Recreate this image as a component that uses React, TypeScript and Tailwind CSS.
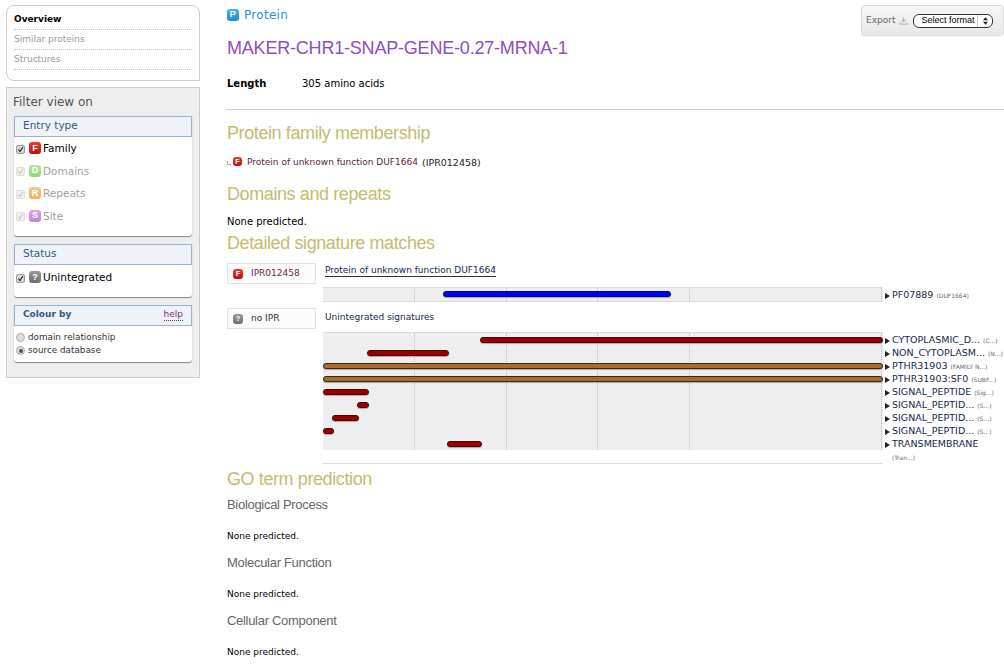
import type { ReactNode } from 'react'

const verdana = "font-['DejaVu_Sans',sans-serif]"

const badgeColors = {
  F: 'bg-gradient-to-b from-[#f0372a] to-[#b80f0a]',
  D: 'bg-gradient-to-b from-[#b4e89a] to-[#92d67a]',
  R: 'bg-gradient-to-b from-[#fcc88e] to-[#f5ab6c]',
  S: 'bg-gradient-to-b from-[#dca2ea] to-[#c57fdb]',
  Q: 'bg-gradient-to-b from-[#9a9a9a] to-[#6f6f6f]',
  P: 'bg-gradient-to-b from-[#41b4f0] to-[#1a8fd8]',
}

function Badge({ kind, label, size = 'w-[12px] h-[12px] text-[9px]' }: { kind: keyof typeof badgeColors; label: string; size?: string }) {
  return (
    <span className={`${size} ${badgeColors[kind]} inline-flex items-center justify-center rounded-[3px] font-bold leading-none text-white shrink-0 font-['Liberation_Sans',sans-serif]`}>
      {label}
    </span>
  )
}

function Check({ disabled }: { disabled?: boolean }) {
  return (
    <span className={`w-[9px] h-[9px] rounded-[2px] border shrink-0 flex items-center justify-center ${disabled ? 'border-[#dedede] bg-[#f0f0f0]' : 'border-[#9a9a9a] bg-[#d8d8d8]'}`}>
      <svg viewBox="0 0 10 10" className="w-[9px] h-[9px]">
        <path d="M2 5 L4.2 8 L8.5 1.5" fill="none" stroke={disabled ? '#c4c4c4' : '#222'} strokeWidth="1.6" />
      </svg>
    </span>
  )
}

function FilterRow({ kind, label, text, disabled }: { kind: keyof typeof badgeColors; label: string; text: string; disabled?: boolean }) {
  return (
    <div className="flex items-center pl-[2px] h-[22.5px]">
      <Check disabled={disabled} />
      <span className="ml-[4px] mb-[7px]">
        <Badge kind={kind} label={label} />
      </span>
      <span className={`ml-[2px] text-[10.5px] ${disabled ? 'text-[#a0a0a0]' : 'text-black'}`}>{text}</span>
    </div>
  )
}

function FilterBox({ title, right, bold, bodyClass, children }: { title: string; right?: ReactNode; bold?: boolean; bodyClass: string; children: ReactNode }) {
  return (
    <div className="mx-[7px] bg-white rounded-b-[3px] shadow-[0_1px_1px_#888]">
      <div className={`h-[21px] pb-[1px] bg-[#eff3f7] border border-[#97b4d0] flex items-center justify-between px-[8px] text-[#35587f] ${bold ? 'text-[9px] font-bold' : 'text-[10.5px]'}`}>
        <span>{title}</span>
        {right}
      </div>
      <div className={bodyClass}>{children}</div>
    </div>
  )
}

function Sidebar() {
  return (
    <aside className="w-[194px] ml-[6px] shrink-0 pt-[5px]">
      <nav className="h-[76px] border border-[#cccccc] rounded-tr-[8px] rounded-tl-[8px] rounded-bl-[8px] px-[7px] pt-[4px] text-[9px]">
        <div className="h-[20px] pt-[1px] flex items-center border-b border-dotted border-[#c4c4c4] font-bold text-black">Overview</div>
        <div className="h-[20px] pt-[1px] flex items-center border-b border-dotted border-[#c4c4c4] text-[#999999]">Similar proteins</div>
        <div className="h-[20px] pt-[1px] flex items-center border-b border-dotted border-[#c4c4c4] text-[#999999]">Structures</div>
      </nav>
      <div className="mt-[6px] h-[291px] bg-[#eeeeee] border border-[#cccccc] pt-[7px]">
        <div className="h-[14px] pl-[6px] mb-[7px] flex items-center text-[12px] text-[#555555]">Filter view on</div>
        <FilterBox title="Entry type" bodyClass="h-[99px] pt-[1px]">
          <FilterRow kind="F" label="F" text="Family" />
          <FilterRow kind="D" label="D" text="Domains" disabled />
          <FilterRow kind="R" label="R" text="Repeats" disabled />
          <FilterRow kind="S" label="S" text="Site" disabled />
        </FilterBox>
        <div className="h-[8px]" />
        <FilterBox title="Status" bodyClass="h-[32px] pt-[2px]">
          <FilterRow kind="Q" label="?" text="Unintegrated" />
        </FilterBox>
        <div className="h-[8px]" />
        <FilterBox
          title="Colour by"
          bold
          right={<span className="text-[9px] font-normal text-[#7b2a7b] border-b border-dotted border-[#7b2a7b] leading-[11px]">help</span>}
          bodyClass="h-[36px] pt-[5px] pl-[2px] text-[8.8px] text-[#333]"
        >
          <div className="h-[13px] flex items-center">
            <span className="w-[9px] h-[9px] rounded-full border border-[#aaa] bg-[#ddd] mr-[3px]" />
            domain relationship
          </div>
          <div className="h-[13px] flex items-center">
            <span className="w-[9px] h-[9px] rounded-full border border-[#aaa] bg-[#ddd] mr-[3px] flex items-center justify-center">
              <span className="w-[4px] h-[4px] rounded-full bg-[#555]" />
            </span>
            source database
          </div>
        </FilterBox>
      </div>
    </aside>
  )
}

function Heading({ children, className }: { children: ReactNode; className: string }) {
  return <h2 className={`font-['Liberation_Sans',sans-serif] text-[18px] tracking-[-0.4px] text-[#c4bc6c] flex items-center ${className}`}>{children}</h2>
}

function SubHeading({ children }: { children: ReactNode }) {
  return <h3 className="font-['Liberation_Sans',sans-serif] h-[22px] flex items-center text-[13px] tracking-[-0.3px] text-[#666666]">{children}</h3>
}

const grid = [91, 183, 274, 366, 558]

function Track({ className, children }: { className: string; children: ReactNode }) {
  return (
    <div className={`relative w-[560px] bg-[#eeeeee] ${className}`}>
      {grid.map((x) => (
        <span key={x} className="absolute top-0 bottom-0 border-l border-dotted border-[#bdbdbd]" style={{ left: x }} />
      ))}
      {children}
    </div>
  )
}

const barColor = {
  blue: 'bg-[#0000f0] border-[#000090]',
  red: 'bg-[#990000] border-[#500000]',
  brown: 'bg-[#a86c32] border-[#3a2a14]',
}

function Bar({ from, to, top, color }: { from: number; to: number; top: number; color: keyof typeof barColor }) {
  return (
    <span
      className={`absolute h-[6px] rounded-full border shadow-[0_1px_1px_#aaa] ${barColor[color]}`}
      style={{ left: from - 323, width: to - from, top }}
    />
  )
}

function Arrow() {
  return (
    <svg viewBox="0 0 5 6" className="w-[5px] h-[6px] shrink-0">
      <path d="M0 0 L5 3 L0 6 Z" fill="#222" />
    </svg>
  )
}

const matches: { from: number; to: number; color: keyof typeof barColor; name: string; note: string }[] = [
  { from: 480, to: 883, color: 'red', name: 'CYTOPLASMIC_D...', note: '(C...)' },
  { from: 367, to: 449, color: 'red', name: 'NON_CYTOPLASM...', note: '(N...)' },
  { from: 323, to: 883, color: 'brown', name: 'PTHR31903', note: '(FAMILY N...)' },
  { from: 323, to: 883, color: 'brown', name: 'PTHR31903:SF0', note: '(SUBF...)' },
  { from: 323, to: 369, color: 'red', name: 'SIGNAL_PEPTIDE', note: '(Sig...)' },
  { from: 357, to: 369, color: 'red', name: 'SIGNAL_PEPTID...', note: '(S...)' },
  { from: 332, to: 359, color: 'red', name: 'SIGNAL_PEPTID...', note: '(S...)' },
  { from: 323, to: 334, color: 'red', name: 'SIGNAL_PEPTID...', note: '(S...)' },
  { from: 447, to: 482, color: 'red', name: 'TRANSMEMBRANE', note: '' },
]

function TrackLabel({ name, note }: { name: string; note: string }) {
  return (
    <div className="h-[13px] flex items-center whitespace-nowrap">
      <Arrow />
      <span className="ml-[2px] text-[9.5px] text-[#14284b]">{name}</span>
      {note && <span className="ml-[3px] text-[6px] text-[#666]">{note}</span>}
    </div>
  )
}

function EntryTag({ className, children }: { className: string; children: ReactNode }) {
  return <div className={`w-[89px] bg-[#fbfbfb] border border-[#e2e2e2] flex items-center pl-[5px] gap-[8px] text-[9px] shrink-0 ${className}`}>{children}</div>
}

export default function App() {
  return (
    <div className={`w-[1004px] h-[667px] overflow-hidden bg-white flex ${verdana}`}>
      <Sidebar />
      <main className="ml-[27px] flex-1 relative text-[9px] text-black">
        {/* Export */}
        <div className="absolute top-[5px] right-0 w-[143px] h-[31px] rounded-[3px] border border-[#dddddd] bg-gradient-to-b from-[#f6f6f6] to-[#e8e8e8] flex items-center pl-[4px] text-[#666]">
          Export
          <svg viewBox="0 0 10 10" className="w-[9px] h-[9px] ml-[4px]">
            <path d="M5 1 V6 M3 4 L5 6.5 L7 4 M1 7 V9 H9 V7" fill="none" stroke="#bbb" strokeWidth="1.3" />
          </svg>
          <div className="ml-[5px] w-[80px] h-[14px] rounded-[6px] border border-[#333] bg-white flex items-center text-[9px] text-black font-['Liberation_Sans',sans-serif] pl-[7px] whitespace-nowrap">
            <span className="flex-1">Select format</span>
            <span className="w-[15px] h-full border-l border-[#ccc] flex items-center justify-center">
              <svg viewBox="0 0 6 9" className="w-[5px] h-[8px]">
                <path d="M3 0 L6 3.5 H0 Z M3 9 L0 5.5 H6 Z" fill="#222" />
              </svg>
            </span>
          </div>
        </div>

        <div className="h-[28px] pt-[1px] flex items-center gap-[5px] text-[12px] tracking-[0.3px] text-[#2a8fe0]">
          <Badge kind="P" label="P" />
          Protein
        </div>
        <h1 className="h-[40px] pt-[1px] flex items-center font-['Liberation_Sans',sans-serif] text-[18px] tracking-[-0.2px] text-[#8a4fc0]">
          MAKER-CHR1-SNAP-GENE-0.27-MRNA-1
        </h1>
        <div className="h-[30px] flex items-center text-[10px]">
          <span className="w-[75px] font-bold">Length</span>
          <span>305 amino acids</span>
        </div>
        <hr className="mt-[11px] border-[#cccccc]" />
        <Heading className="h-[46px]">Protein family membership</Heading>
        <div className="h-[10px] mt-[2px] flex items-center">
          <span className="w-[4px] h-[4px] border-l border-b border-[#aaa] mr-[2px]" />
          <span className="mb-[3px] mr-[5px]">
            <Badge kind="F" label="F" size="w-[9px] h-[9px] text-[7px]" />
          </span>
          <span className="text-[#5a2440]">Protein of unknown function DUF1664</span>
          <span className="ml-[4px] text-[9.5px] text-[#222]">(IPR012458)</span>
        </div>
        <Heading className="h-[43px] mt-[5px]">Domains and repeats</Heading>
        <div className="h-[10px] flex items-center text-[10px]">None predicted.</div>
        <Heading className="h-[35px]">Detailed signature matches</Heading>

        <div className="flex items-start mt-[2px]">
          <EntryTag className="h-[21px]">
            <Badge kind="F" label="F" size="w-[10px] h-[10px] text-[7.5px]" />
            <span className="text-[#6a2a50]">IPR012458</span>
          </EntryTag>
          <div className="ml-[7px]">
            <div className="h-[24px] flex items-start pl-[2px] pt-[2px]">
              <span className="border-b border-[#333] text-[#14284b] leading-[11px]">Protein of unknown function DUF1664</span>
            </div>
            <div className="flex">
              <Track className="h-[15px] border-y border-[#dddddd]">
                <Bar from={443} to={671} top={3} color="blue" />
              </Track>
              <div className="ml-[2px] pt-[2px]">
                <TrackLabel name="PF07889" note="(DUF1664)" />
              </div>
            </div>
          </div>
        </div>

        <div className="flex items-start mt-[6px]">
          <EntryTag className="h-[21px]">
            <Badge kind="Q" label="?" size="w-[10px] h-[10px] text-[7.5px]" />
            <span className="text-[#333]">no IPR</span>
          </EntryTag>
          <div className="ml-[7px] h-[24px] pl-[2px] pt-[3px] leading-[12px] text-[#14284b]">Unintegrated signatures</div>
        </div>
        <div className="flex ml-[96px]">
          <Track className="h-[118px] border-t border-[#dddddd]">
            {matches.map((m, i) => (
              <Bar key={i} from={m.from} to={m.to} top={4 + i * 13} color={m.color} />
            ))}
          </Track>
          <div className="ml-[2px] h-[118px] pt-[2px]">
            {matches.map((m, i) => (
              <TrackLabel key={i} name={m.name} note={m.note} />
            ))}
            <div className="pl-[7px] pt-[2px] text-[6px] text-[#666]">(Tran...)</div>
          </div>
        </div>
        <hr className="ml-[96px] w-[560px] mt-[13px] border-[#dddddd]" />

        <Heading className="h-[30px]">GO term prediction</Heading>
        <SubHeading>Biological Process</SubHeading>
        <div className="h-[36px] pt-[5px] flex items-center">None predicted.</div>
        <SubHeading>Molecular Function</SubHeading>
        <div className="h-[36px] pt-[5px] flex items-center">None predicted.</div>
        <SubHeading>Cellular Component</SubHeading>
        <div className="h-[36px] pt-[5px] flex items-center">None predicted.</div>
      </main>
    </div>
  )
}
